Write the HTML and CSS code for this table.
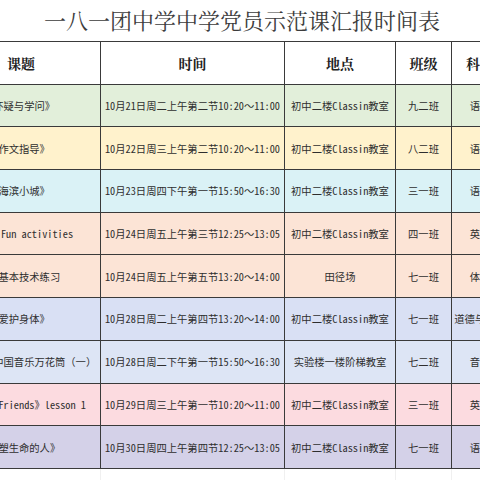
FILE: index.html
```html
<!DOCTYPE html>
<html lang="zh-CN">
<head>
<meta charset="utf-8">
<title>一八一团中学中学党员示范课汇报时间表</title>
<link rel="stylesheet" href="styles.css">
</head>
<body>
<div class="page">
  <h1 class="title">一八一团中学中学党员示范课汇报时间表</h1>
  <div class="sheet">
    <table class="grid">
      <colgroup>
        <col class="c-topic"><col class="c-time"><col class="c-place"><col class="c-class"><col class="c-subj">
      </colgroup>
      <thead>
        <tr class="head">
          <th class="h-topic">课题</th><th>时间</th><th>地点</th><th>班级</th><th>科目</th>
        </tr>
      </thead>
      <tbody>
        <tr class="r-green"><td>《怀疑与学问》</td><td>10月21日周二上午第二节10:20～11:00</td><td>初中二楼Classin教室</td><td>九二班</td><td>语文</td></tr>
        <tr class="r-yellow"><td>《作文指导》</td><td>10月22日周三上午第二节10:20～11:00</td><td>初中二楼Classin教室</td><td>八二班</td><td>语文</td></tr>
        <tr class="r-cyan"><td>《海滨小城》</td><td>10月23日周四下午第一节15:50～16:30</td><td>初中二楼Classin教室</td><td>三一班</td><td>语文</td></tr>
        <tr class="r-peach"><td>Unit 4 Fun activities</td><td>10月24日周五上午第三节12:25～13:05</td><td>初中二楼Classin教室</td><td>四一班</td><td>英语</td></tr>
        <tr class="r-peach"><td>篮球基本技术练习</td><td>10月24日周五上午第五节13:20～14:00</td><td>田径场</td><td>七一班</td><td>体育</td></tr>
        <tr class="r-blue"><td>《爱护身体》</td><td>10月28日周二上午第四节13:20～14:00</td><td>初中二楼Classin教室</td><td>七一班</td><td>道德与法治</td></tr>
        <tr class="r-blue2"><td>音乐欣赏：中国音乐万花筒（一）</td><td>10月28日周二下午第一节15:50～16:30</td><td>实验楼一楼阶梯教室</td><td>七二班</td><td>音乐</td></tr>
        <tr class="r-pink"><td>Unit 5 《Friends》lesson 1</td><td>10月29日周三上午第一节10:20～11:00</td><td>初中二楼Classin教室</td><td>三一班</td><td>英语</td></tr>
        <tr class="r-lilac"><td>《再塑生命的人》</td><td>10月30日周四上午第四节12:25～13:05</td><td>初中二楼Classin教室</td><td>七一班</td><td>语文</td></tr>
        <tr class="r-empty"><td></td><td></td><td></td><td></td><td></td></tr>
      </tbody>
    </table>
  </div>
</div>
</body>
</html>
```
FILE: styles.css
```css
html, body {
  margin: 0;
  padding: 0;
  background: #ffffff;
}
.page {
  width: 480px;
  height: 480px;
  overflow: hidden;
  background: #ffffff;
}
.title {
  margin: 0;
  height: 41px;
  box-sizing: border-box;
  padding-top: 7px;
  padding-left: 4px;
  text-align: center;
  font-family: "Noto Serif CJK SC", "Noto Sans CJK SC", serif;
  font-weight: 400;
  font-size: 22px;
  line-height: 26px;
  color: #3c3c3c;
  white-space: nowrap;
}
.sheet {
  width: 480px;
  overflow: hidden;
}
.grid {
  margin-left: -63px;
  border-collapse: collapse;
  table-layout: fixed;
  width: 571px;
  font-family: "Noto Sans Mono CJK SC", "Noto Sans CJK SC", monospace;
  font-size: 10.3px;
  color: #2e2e2e;
}
.c-topic { width: 163px; }
.c-time { width: 184px; }
.c-place { width: 111px; }
.c-class { width: 56px; }
.c-subj { width: 57px; }
.grid th,
.grid td {
  border: 1px solid #3a3a3a;
  height: 41.7px;
  padding: 0;
  text-align: center;
  vertical-align: middle;
  white-space: nowrap;
}
.grid th {
  font-family: "Noto Serif CJK SC", "Noto Sans CJK SC", serif;
  font-weight: 700;
  font-size: 14px;
  color: #222;
  background: #ffffff;
}
.grid .h-topic {
  padding-left: 4px;
}
.grid .r-empty td {
  height: 12px;
  border-color: #f0f0f0;
  border-top-color: #3a3a3a;
  background: #ffffff;
}
.r-green td { background: #e2efda; }
.r-yellow td { background: #fff2cc; }
.r-cyan td { background: #daf2f6; }
.r-peach td { background: #fce4d6; }
.r-blue td { background: #d9e0f4; }
.r-blue2 td { background: #dde5f5; }
.r-pink td { background: #fcdbe0; }
.r-lilac td { background: #d4d1e8; }
```
